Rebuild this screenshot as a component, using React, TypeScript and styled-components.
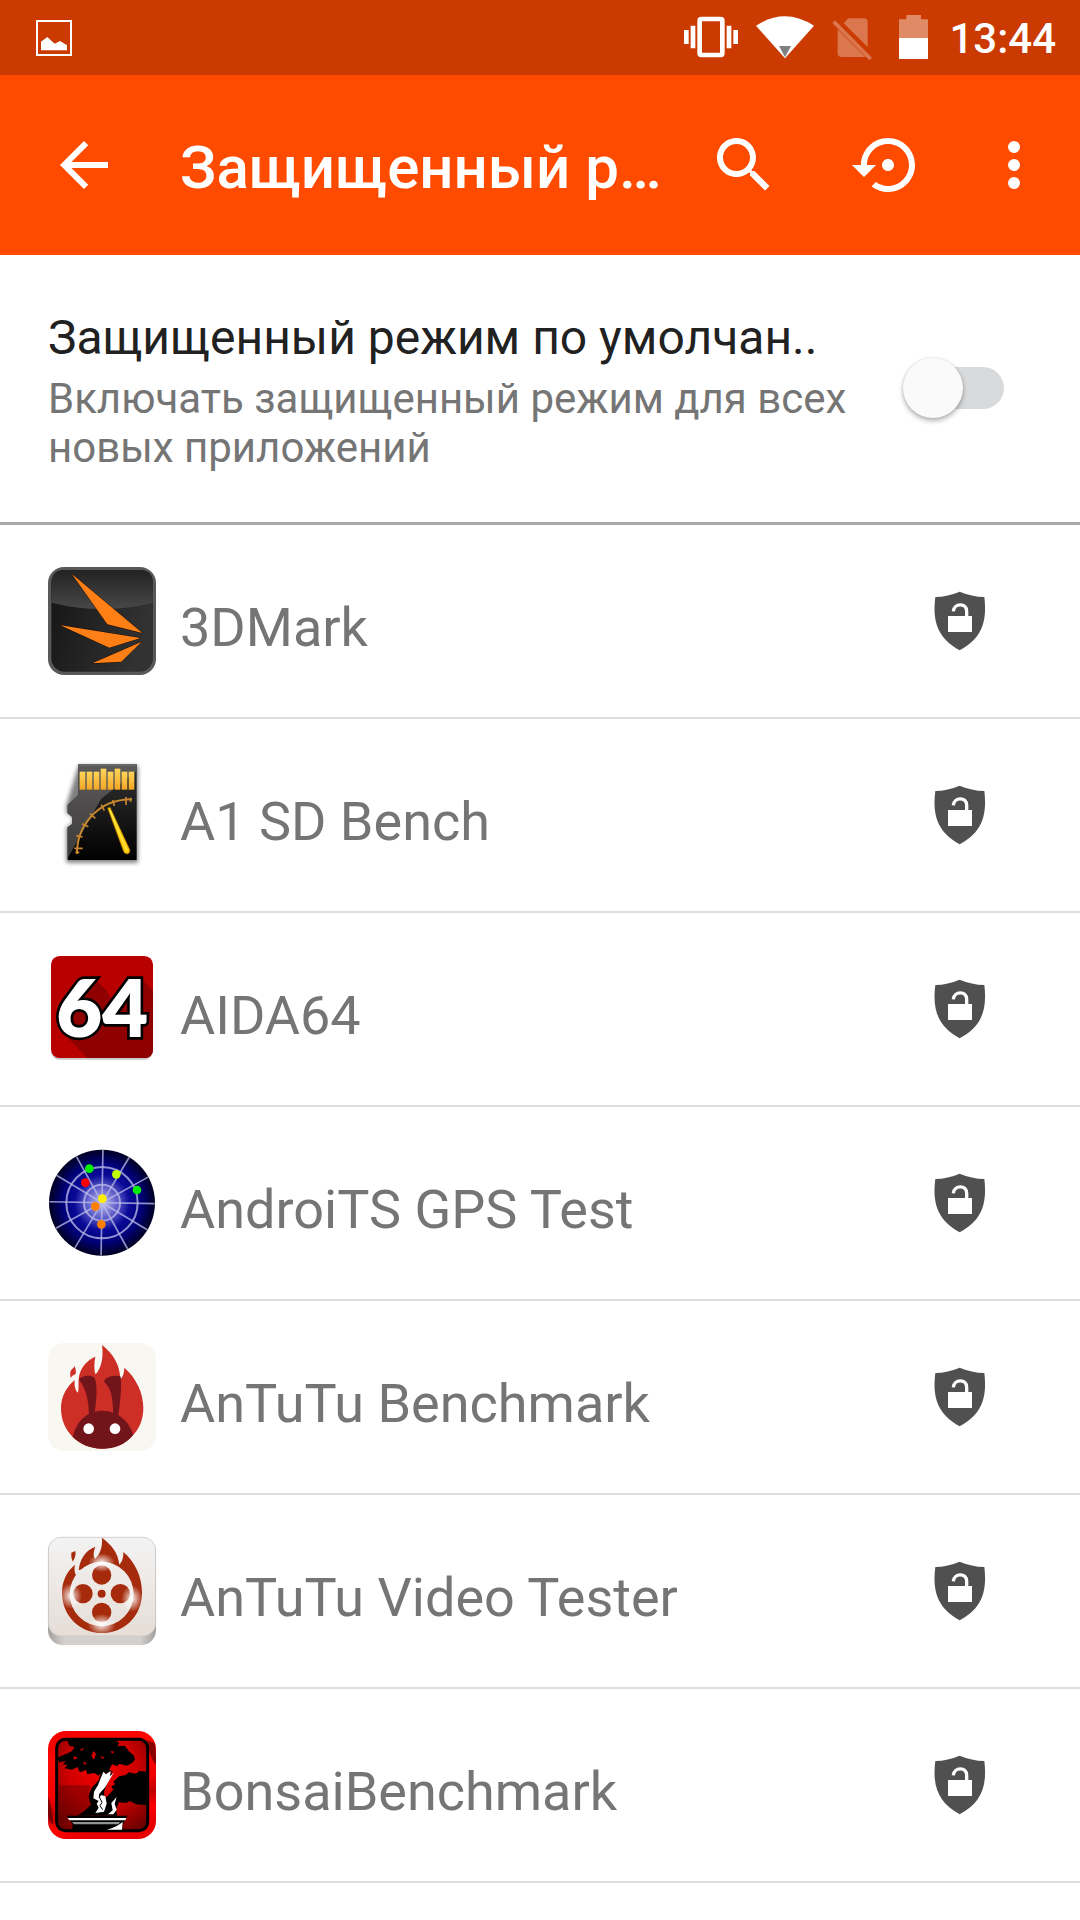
import React, { useState } from 'react';
import styled, { createGlobalStyle } from 'styled-components';

const GlobalStyle = createGlobalStyle`
  *, *::before, *::after { box-sizing: border-box; }
  body {
    margin: 0;
    background: #fff;
    font-family: Roboto, "Noto Sans", sans-serif;
  }
`;

const Screen = styled.div`
  display: flex;
  flex-direction: column;
  min-height: 100vh;
  overflow: hidden;
  background: #fff;
`;

const StatusBar = styled.div`
  display: flex;
  align-items: center;
  justify-content: space-between;
  height: 75px;
  padding: 0 24px 0 33px;
  background: #cb3a00;
  color: #fff;
`;

const StatusIcons = styled.div`
  display: flex;
  align-items: center;
  gap: 18px;
`;

const StatusGlyph = styled.svg<{ $width: number }>`
  display: block;
  width: ${(p) => p.$width}px;
  height: 45px;
`;

const Clock = styled.time`
  padding: 3px 0 0 3px;
  font-size: 42px;
  font-weight: 500;
  line-height: 48px;
`;

const AppBar = styled.header`
  display: flex;
  align-items: center;
  height: 180px;
  padding: 0 12px;
  background: #ff4b00;
  color: #fff;
`;

const BarButton = styled.button<{ $width: number }>`
  display: flex;
  flex: none;
  align-items: center;
  justify-content: center;
  width: ${(p) => p.$width}px;
  height: 144px;
  padding: 0;
  border: 0;
  background: none;
  color: inherit;
  cursor: pointer;
`;

const Icon = styled.svg`
  display: block;
  width: 72px;
  height: 72px;
  fill: currentColor;
`;

const Title = styled.h1`
  flex: 1;
  min-width: 0;
  margin: 0;
  padding: 6px 0 0 24px;
  overflow: hidden;
  font-size: 60px;
  font-weight: 500;
  line-height: 72px;
  text-overflow: ellipsis;
  white-space: nowrap;
`;

const DefaultSetting = styled.label`
  display: flex;
  align-items: center;
  justify-content: space-between;
  gap: 48px;
  padding: 55px 76px 50px 48px;
  border-bottom: 3px solid #a9a9a9;
  cursor: pointer;
`;

const SettingText = styled.span`
  display: flex;
  flex: 1;
  flex-direction: column;
  gap: 8px;
  min-width: 0;
`;

const SettingTitle = styled.span`
  overflow: hidden;
  color: #212121;
  font-size: 48px;
  line-height: 56px;
  white-space: nowrap;
`;

const SettingSummary = styled.span`
  color: #757575;
  font-size: 42px;
  line-height: 49px;
`;

const Switch = styled.input`
  position: relative;
  flex: none;
  width: 84px;
  height: 42px;
  margin: 0 0 6px;
  border-radius: 21px;
  appearance: none;
  background: #d9dadc;
  cursor: pointer;

  &::before {
    position: absolute;
    top: -9px;
    left: -17px;
    width: 60px;
    height: 60px;
    border-radius: 50%;
    background: #fafafa;
    box-shadow: 0 3px 5px rgba(0, 0, 0, 0.28), 0 0 3px rgba(0, 0, 0, 0.12);
    content: "";
  }

  &:checked { background: #ffb799; }
  &:checked::before { left: 41px; background: #ff4b00; }
`;

const AppList = styled.ul`
  margin: 0;
  padding: 0;
  list-style: none;
`;

const AppRow = styled.li`
  display: flex;
  align-items: center;
  gap: 24px;
  padding: 42px 48px;
  border-bottom: 2px solid #dedede;
`;

const AppIcon = styled.svg`
  display: block;
  flex: none;
  width: 108px;
  height: 108px;
  overflow: visible;
`;

const AppName = styled.span`
  flex: 1;
  padding-top: 14px;
  color: #757575;
  font-size: 54px;
  line-height: 64px;
`;

const LockButton = styled.button`
  display: flex;
  flex: none;
  align-items: center;
  justify-content: center;
  width: 144px;
  height: 108px;
  padding: 0;
  border: 0;
  background: none;
  color: #505050;
  cursor: pointer;
`;

const ThreeDMarkIcon = () => (
  <AppIcon viewBox="54 51 324 324" aria-hidden="true">
    <defs>
      <linearGradient id="dm-body" x1="0" y1="0" x2="1" y2="0.3">
        <stop offset="0" stopColor="#141414" />
        <stop offset="1" stopColor="#323232" />
      </linearGradient>
      <linearGradient id="dm-gloss" x1="0" y1="0" x2="0" y2="1">
        <stop offset="0" stopColor="#222" />
        <stop offset="1" stopColor="#484848" />
      </linearGradient>
    </defs>
    <rect x="54" y="51" width="324" height="324" rx="48" fill="#595959" />
    <rect x="64" y="60" width="305" height="305" rx="40" fill="url(#dm-body)" />
    <path d="M64 158V100Q64 60 104 60H329Q369 60 369 100V158Q216 196 64 158Z" fill="url(#dm-gloss)" />
    <g fill="#ff7f17" stroke="#1a0c00" strokeWidth="3" paintOrder="stroke">
      <path d="M125 71L337 249L232 223Z" />
      <path d="M91 226L332 264L238 293Z" />
      <path d="M187 340L335 275L274 335Z" />
    </g>
  </AppIcon>
);

const SdBenchIcon = () => (
  <AppIcon viewBox="54 48 324 324" aria-hidden="true">
    <defs>
      <linearGradient id="sd-body" x1="0" y1="0" x2="0" y2="1">
        <stop offset="0" stopColor="#303030" />
        <stop offset="0.35" stopColor="#222" />
        <stop offset="1" stopColor="#000" />
      </linearGradient>
      <linearGradient id="sd-gloss" x1="0" y1="0" x2="0" y2="1">
        <stop offset="0" stopColor="#5c5a59" />
        <stop offset="1" stopColor="#3c3b3b" />
      </linearGradient>
      <linearGradient id="sd-gold" x1="0" y1="0" x2="0" y2="1">
        <stop offset="0" stopColor="#ffd65a" />
        <stop offset="1" stopColor="#f3a524" />
      </linearGradient>
      <filter id="sd-shadow" x="-20%" y="-20%" width="140%" height="140%">
        <feGaussianBlur stdDeviation="7" />
      </filter>
    </defs>
    <path d="M145 62H324V353H109V247L127 238V213L109 205V180Z" fill="#000" opacity=".5" filter="url(#sd-shadow)" />
    <path d="M145 57H320V345H113V247L126 238V215L113 205V180L145 150Z" fill="url(#sd-body)" />
    <path d="M145 57H320V77L213 162L113 340V247L126 238V215L113 205V180L145 150Z" fill="url(#sd-gloss)" />
    <path d="M147 60H317" stroke="#777" strokeWidth="3" />
    {[80, 80, 80, 71, 80, 71, 80, 80].map((top, i) => (
      <rect key={i} x={149 + i * 21} y={top} width="17" height={134 - top} fill="url(#sd-gold)" />
    ))}
    <g fill="none" stroke="#c98730" strokeWidth="6">
      <path d="M141 327C140 250 196 163 306 163" />
      <path strokeWidth="5" d="M133 310H158M139 272L158 276M156 236L175 245M180 206L196 220M214 179L223 197M248 165L253 183M288 156V180M136 322H148M302 158V170" />
    </g>
    <path d="M233 190Q236 185 241 188L300 315Q300 326 292 327Q283 327 280 318Z" fill="#ffc90e" stroke="#8a5a00" strokeWidth="2" />
    <path d="M240 196L291 318" stroke="#ffe640" strokeWidth="5" />
  </AppIcon>
);

const AidaIcon = () => (
  <AppIcon viewBox="54 45 324 324" aria-hidden="true">
    <rect x="63" y="53" width="306" height="306" rx="26" fill="#000" opacity=".22" />
    <rect x="63" y="48" width="306" height="306" rx="26" fill="#b80000" />
    <path d="M192 115L228 150L250 190L290 115H332L369 152V328Q369 354 343 354H172L100 280Z" fill="#8f0000" />
    <text
      x="217"
      y="292"
      textAnchor="middle"
      fontFamily="Lato, sans-serif"
      fontSize="238"
      fontWeight="800"
      fill="#fff"
      stroke="#000"
      strokeWidth="16"
      paintOrder="stroke"
    >
      64
    </text>
  </AppIcon>
);

const GpsIcon = () => (
  <AppIcon viewBox="54 42 324 324" aria-hidden="true">
    <defs>
      <radialGradient id="gps-disc">
        <stop offset="0" stopColor="#c4c4f4" />
        <stop offset="0.3" stopColor="#5a5ac8" />
        <stop offset="0.52" stopColor="#0a0a98" />
        <stop offset="0.75" stopColor="#000078" />
        <stop offset="1" stopColor="#000022" />
      </radialGradient>
    </defs>
    <circle cx="216" cy="203" r="159" fill="url(#gps-disc)" />
    <g fill="none" stroke="#b9b9e8" strokeOpacity=".78" strokeWidth="5">
      {[1, 31, 61, 91, 121, 151].map((angle) => (
        <path key={angle} d="M216 45V361" transform={`rotate(${angle} 216 203)`} />
      ))}
      <circle cx="216" cy="203" r="54" strokeWidth="6" />
      <circle cx="216" cy="203" r="107" strokeWidth="6" />
    </g>
    <circle cx="178" cy="101" r="13" fill="#00f000" />
    <circle cx="321" cy="165" r="13" fill="#00f000" />
    <circle cx="259" cy="118" r="13" fill="#c0ff00" />
    <circle cx="166" cy="143" r="13" fill="#f00" />
    <circle cx="217" cy="191" r="13" fill="#fff000" />
    <circle cx="196" cy="214" r="13" fill="#ff8000" />
    <circle cx="214" cy="268" r="13" fill="#ff8000" />
  </AppIcon>
);

const AntutuIcon = () => (
  <AppIcon viewBox="54 54 324 324" aria-hidden="true">
    <rect x="54" y="54" width="324" height="324" rx="48" fill="#f8f7f1" />
    <g fill="#cd2e26">
      <path d="M216 60C248 85 270 118 271 163C281 153 282 142 283 128C318 158 340 203 340 250C340 320 285 371 216 371C148 371 93 320 93 250C93 212 112 184 134 165C132 185 138 200 144 203C148 185 143 170 148 150C155 122 175 104 196 95C192 115 192 138 197 148C215 128 221 95 216 60Z" />
      <path d="M134 124Q140 140 136 148Q128 150 122 158Q119 143 123 136Q129 131 134 124Z" />
    </g>
    <g fill="#72151b">
      <path d="M128 335C140 285 175 257 216 257C262 257 300 290 309 330C285 360 255 371 216 371C180 371 148 356 128 335Z" />
      <path d="M147 164C155 150 184 150 192 157C204 172 200 230 193 268L177 270C176 225 168 190 147 164Z" />
      <path d="M222 170C226 152 262 149 272 155C276 190 270 235 265 272L250 268C248 215 245 192 222 170Z" />
    </g>
    <circle cx="176" cy="311" r="16" fill="#fff" />
    <circle cx="255" cy="311" r="16" fill="#fff" />
  </AppIcon>
);

const AntutuVideoIcon = () => (
  <AppIcon viewBox="54 51 324 324" aria-hidden="true">
    <defs>
      <linearGradient id="av-base" x1="0" y1="0" x2="1" y2="0">
        <stop offset="0" stopColor="#a29f9d" />
        <stop offset="0.15" stopColor="#d3d0ce" />
        <stop offset="0.85" stopColor="#d3d0ce" />
        <stop offset="1" stopColor="#a29f9d" />
      </linearGradient>
      <linearGradient id="av-face" x1="0" y1="0" x2="0" y2="1">
        <stop offset="0" stopColor="#f3f3f3" />
        <stop offset="1" stopColor="#e6ddd6" />
      </linearGradient>
      <radialGradient id="av-glow">
        <stop offset="0" stopColor="#fff" stopOpacity=".95" />
        <stop offset="0.35" stopColor="#fff" stopOpacity=".6" />
        <stop offset="1" stopColor="#fff" stopOpacity="0" />
      </radialGradient>
    </defs>
    <rect x="54" y="51" width="324" height="324" rx="44" fill="url(#av-base)" />
    <rect x="55" y="52" width="322" height="296" rx="38" fill="url(#av-face)" stroke="#c9c7c5" strokeWidth="2" />
    <g fill="#a52b0c">
      <path
        fillRule="evenodd"
        d="M216 53C245 75 264 98 268 134C279 122 280 110 280 96C315 125 336 170 336 218C336 286 285 339 216 339C148 339 96 286 96 218C96 184 110 154 135 134C132 146 134 158 138 166C142 158 150 150 160 144C150 150 148 150 146 150C150 118 165 92 196 80C189 98 190 110 196 116C211 102 218 78 216 53ZM215 125A96 97 0 1 0 215 319A96 97 0 1 0 215 125Z"
      />
      <path d="M124 98L136 93Q139 110 128 125Q122 112 124 98Z" />
      <circle cx="215" cy="165" r="29" />
      <circle cx="159" cy="221" r="29" />
      <circle cx="271" cy="221" r="29" />
      <circle cx="215" cy="277" r="29" />
      <circle cx="215" cy="221" r="12" />
    </g>
    <g fill="url(#av-glow)">
      <ellipse cx="215" cy="128" rx="40" ry="28" />
      <ellipse cx="122" cy="228" rx="34" ry="38" />
      <ellipse cx="306" cy="236" rx="32" ry="40" />
      <ellipse cx="215" cy="314" rx="42" ry="32" />
    </g>
  </AppIcon>
);

const BonsaiIcon = () => (
  <AppIcon viewBox="54 48 324 324" aria-hidden="true">
    <defs>
      <linearGradient id="bo-frame" x1="0" y1="0" x2="0.25" y2="1">
        <stop offset="0" stopColor="#f00000" />
        <stop offset="0.3" stopColor="#ff0800" />
        <stop offset="0.6" stopColor="#f40000" />
        <stop offset="0.75" stopColor="#c00000" />
        <stop offset="0.88" stopColor="#ff0000" />
        <stop offset="1" stopColor="#e80000" />
      </linearGradient>
      <radialGradient id="bo-inner" cx="0.5" cy="0.35" r="0.75">
        <stop offset="0" stopColor="#f20000" />
        <stop offset="0.5" stopColor="#d00000" />
        <stop offset="1" stopColor="#6c0000" />
      </radialGradient>
    </defs>
    <rect x="54" y="48" width="324" height="324" rx="54" fill="url(#bo-frame)" />
    <path d="M374 85Q378 95 378 150Q360 130 350 75ZM54 245Q66 270 70 330Q56 320 54 295Z" fill="#500" opacity=".7" />
    <rect x="80" y="73" width="273" height="274" rx="26" fill="url(#bo-inner)" stroke="#000" strokeWidth="9" />
    <path d="M84 211H180V300L115 320L84 325Z" fill="#500000" opacity=".4" />
    <path d="M112 76L250 73L268 84L262 94L284 92L296 108L312 122L315 134L306 144L290 152L268 146L262 154L246 148L238 164L250 172L232 174L216 172L206 182L192 174L172 178L168 164L150 172L142 156L126 164L104 160L112 150L98 148L108 138L88 142L82 128L100 120L110 116L126 108L134 96L118 92Z" fill="#000" />
    <path d="M150 104L162 98L156 108ZM190 108L198 116L192 134L184 124ZM212 122L224 128L216 132ZM130 124L144 128L132 134ZM242 108L254 110L246 116ZM160 140L170 144L162 150Z" fill="#d80000" />
    <path d="M352 170L328 168L318 176L296 172L288 180L268 184L250 200L256 208L244 214L250 224L236 240L224 250L222 230L234 200L248 176L214 170L206 196L184 220L176 244L182 270L164 288L142 302H262L258 284L266 262L288 264L300 258L318 268L350 270Z" fill="#000" />
    <path d="M220 170L228 178L242 168L240 184L252 172L240 192L226 216L208 236L206 250L214 240L226 244L230 266L222 290L196 294L206 278L200 266L206 258L190 250L192 230L204 210Z" fill="#fff" />
    <path d="M208 246L216 262L210 272L218 284" fill="none" stroke="#000" strokeWidth="3" />
    <path d="M260 246L254 266L260 284L250 298L234 298L248 286L244 264Z" fill="#fff" />
    <path d="M110 302H292L278 330V346H126L128 328Z" fill="#000" />
    <path d="M113 309H289L286 316H118Z" fill="#fff" />
    <path d="M126 321H270L266 328H132Z" fill="#8f9694" />
    <path d="M278 320L276 344H230Q262 336 278 320Z" fill="#fff" />
  </AppIcon>
);

const OpenLockShield = () => (
  <Icon viewBox="72 45 216 216" aria-hidden="true">
    <path d="M179 65Q215 80 253 81C263 165 239 208 179 241C121 208 95 165 106 81Q144 80 179 65Z" />
    <rect x="144" y="138" width="72" height="48" fill="#fff" />
    <path d="M160 124C162 99 200 97 200 124V140" fill="none" stroke="#fff" strokeWidth="10" />
  </Icon>
);

const APPS = [
  { name: '3DMark', Art: ThreeDMarkIcon },
  { name: 'A1 SD Bench', Art: SdBenchIcon },
  { name: 'AIDA64', Art: AidaIcon },
  { name: 'AndroiTS GPS Test', Art: GpsIcon },
  { name: 'AnTuTu Benchmark', Art: AntutuIcon },
  { name: 'AnTuTu Video Tester', Art: AntutuVideoIcon },
  { name: 'BonsaiBenchmark', Art: BonsaiIcon },
];

export default function App() {
  const [enabled, setEnabled] = useState(false);

  return (
    <Screen>
      <GlobalStyle />
      <StatusBar>
        <StatusGlyph $width={40} viewBox="99 45 120 135" aria-hidden="true">
          <rect x="111" y="63" width="102" height="102" fill="none" stroke="#fff" strokeWidth="6" />
          <path d="M123 125L142 111L164 131L180 123L201 136V151H123Z" fill="#fff" />
        </StatusGlyph>
        <StatusIcons>
          <StatusGlyph $width={54} viewBox="72 45 162 135" aria-hidden="true">
            <rect x="119" y="57" width="68" height="108" rx="5" fill="none" stroke="#fff" strokeWidth="14" />
            <path d="M72 90H86V132H72ZM92 77H106V145H92ZM200 77H214V145H200ZM220 90H234V132H220Z" fill="#fff" />
          </StatusGlyph>
          <StatusGlyph $width={58} viewBox="288 45 174 135" aria-hidden="true">
            <path d="M288 77Q375 20 462 77L375 175Z" fill="#fff" />
            <path d="M357 138H393L375 172Z" fill="#808080" />
          </StatusGlyph>
          <StatusGlyph $width={49} viewBox="516 45 147 135" aria-hidden="true">
            <path
              d="M565 55H612Q623 55 623 66V141L551 70ZM533 88L616 171H545Q533 171 533 160ZM525 61L636 173L628 181L517 69Z"
              fill="#fff"
              opacity=".31"
            />
          </StatusGlyph>
          <StatusGlyph $width={29} viewBox="717 45 87 135" aria-hidden="true">
            <path d="M739 45H783V58H804V114H717V58H739Z" fill="#e08b66" />
            <path d="M717 114H804V177H717Z" fill="#fff" />
          </StatusGlyph>
          <Clock>13:44</Clock>
        </StatusIcons>
      </StatusBar>

      <AppBar>
        <BarButton type="button" $width={144} aria-label="Назад">
          <Icon viewBox="0 0 24 24" aria-hidden="true">
            <path d="M20 11H7.83l5.59-5.59L12 4l-8 8 8 8 1.41-1.41L7.83 13H20v-2z" />
          </Icon>
        </BarButton>
        <Title>Защищенный р…</Title>
        <BarButton type="button" $width={144} aria-label="Поиск">
          <Icon viewBox="0 0 24 24" aria-hidden="true">
            <path d="M15.5 14h-.79l-.28-.27C15.41 12.59 16 11.11 16 9.5 16 5.91 13.09 3 9.5 3S3 5.91 3 9.5 5.91 16 9.5 16c1.61 0 3.09-.59 4.23-1.57l.27.28v.79l5 4.99L20.49 19l-4.99-5zm-6 0C7.01 14 5 11.99 5 9.5S7.01 5 9.5 5 14 7.01 14 9.5 11.99 14 9.5 14z" />
          </Icon>
        </BarButton>
        <BarButton type="button" $width={144} aria-label="Сбросить">
          <Icon viewBox="0 0 24 24" aria-hidden="true">
            <path d="M14 12c0-1.1-.9-2-2-2s-2 .9-2 2 .9 2 2 2 2-.9 2-2zm-2-9c-4.97 0-9 4.03-9 9H0l4 4 4-4H5c0-3.87 3.13-7 7-7s7 3.13 7 7-3.13 7-7 7c-1.51 0-2.91-.49-4.06-1.3l-1.42 1.44C8.04 20.3 9.94 21 12 21c4.97 0 9-4.03 9-9s-4.03-9-9-9z" />
          </Icon>
        </BarButton>
        <BarButton type="button" $width={108} aria-label="Ещё">
          <Icon viewBox="0 0 24 24" aria-hidden="true">
            <circle cx="12" cy="6" r="2" />
            <circle cx="12" cy="12" r="2" />
            <circle cx="12" cy="18" r="2" />
          </Icon>
        </BarButton>
      </AppBar>

      <DefaultSetting>
        <SettingText>
          <SettingTitle>Защищенный режим по умолчан..</SettingTitle>
          <SettingSummary>Включать защищенный режим для всех новых приложений</SettingSummary>
        </SettingText>
        <Switch type="checkbox" role="switch" checked={enabled} onChange={(e) => setEnabled(e.target.checked)} />
      </DefaultSetting>

      <AppList>
        {APPS.map(({ name, Art }) => (
          <AppRow key={name}>
            <Art />
            <AppName>{name}</AppName>
            <LockButton type="button" aria-label={`Защитить ${name}`}>
              <OpenLockShield />
            </LockButton>
          </AppRow>
        ))}
      </AppList>
    </Screen>
  );
}
